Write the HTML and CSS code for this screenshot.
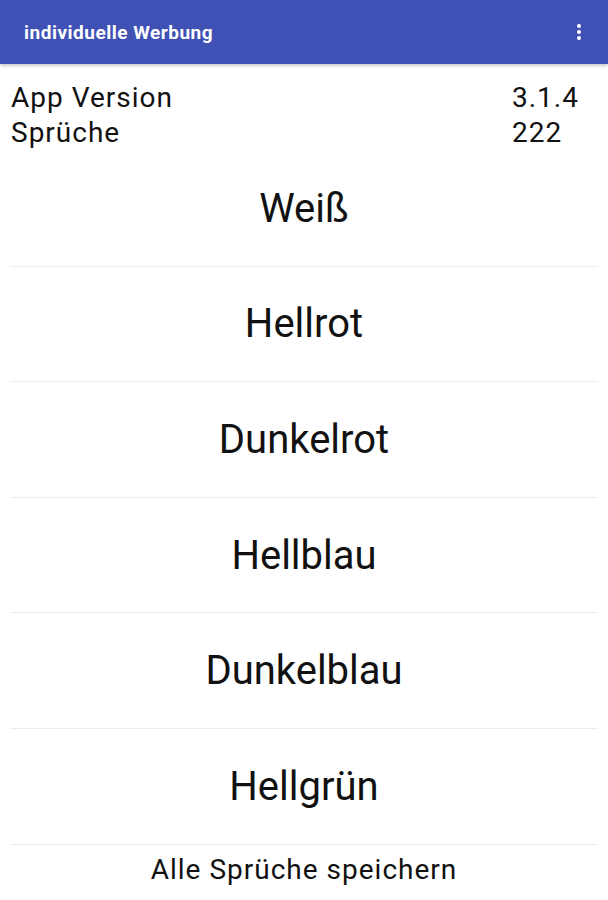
FILE: index.html
```html
<!DOCTYPE html>
<html lang="de">
<head>
  <meta charset="UTF-8" />
  <meta name="viewport" content="width=device-width, initial-scale=1.0" />
  <title>individuelle Werbung</title>
  <link rel="stylesheet" href="styles.css">
</head>
<body>
  <div class="toolbar">
    <span class="title">individuelle Werbung</span>
    <svg class="menu" width="6" height="18" viewBox="0 0 6 18">
      <circle cx="3" cy="3" r="2" fill="#fff" />
      <circle cx="3" cy="9" r="2" fill="#fff" />
      <circle cx="3" cy="15" r="2" fill="#fff" />
    </svg>
  </div>

  <div class="info">
    <div class="info-row"><span class="label">App Version</span><span class="value">3.1.4</span></div>
    <div class="info-row"><span class="label">Sprüche</span><span class="value">222</span></div>
  </div>

  <ul class="colors">
    <li>Weiß</li>
    <li>Hellrot</li>
    <li>Dunkelrot</li>
    <li>Hellblau</li>
    <li>Dunkelblau</li>
    <li>Hellgrün</li>
  </ul>

  <div class="save">Alle Sprüche speichern</div>
</body>
</html>
```

FILE: styles.css
```css
body {
  margin: 0;
  background: #fff;
  color: #111;
  font-family: Roboto, 'Liberation Sans', sans-serif;
}
.toolbar {
  height: 64px;
  background: #3f51b5;
  display: flex;
  align-items: center;
  justify-content: space-between;
  padding: 0 26px 0 24px;
  box-shadow: 0 2px 3px rgba(0, 0, 0, 0.2);
}
.title {
  color: #fff;
  font-size: 19px;
  font-weight: bold;
  letter-spacing: 0.5px;
}
.info {
  padding: 16px 0 0 11px;
}
.info-row {
  display: flex;
  font-size: 28px;
  line-height: 35px;
  letter-spacing: 1px;
}
.label {
  width: 501px;
}
.colors {
  list-style: none;
  margin: 0 10px;
  padding: 1px 0 0;
}
.colors li {
  height: 114.6px;
  display: flex;
  align-items: center;
  justify-content: center;
  font-size: 40px;
  border-bottom: 1px solid #ececec;
}
.save {
  text-align: center;
  font-size: 28px;
  line-height: 50px;
  letter-spacing: 1px;
}
```
